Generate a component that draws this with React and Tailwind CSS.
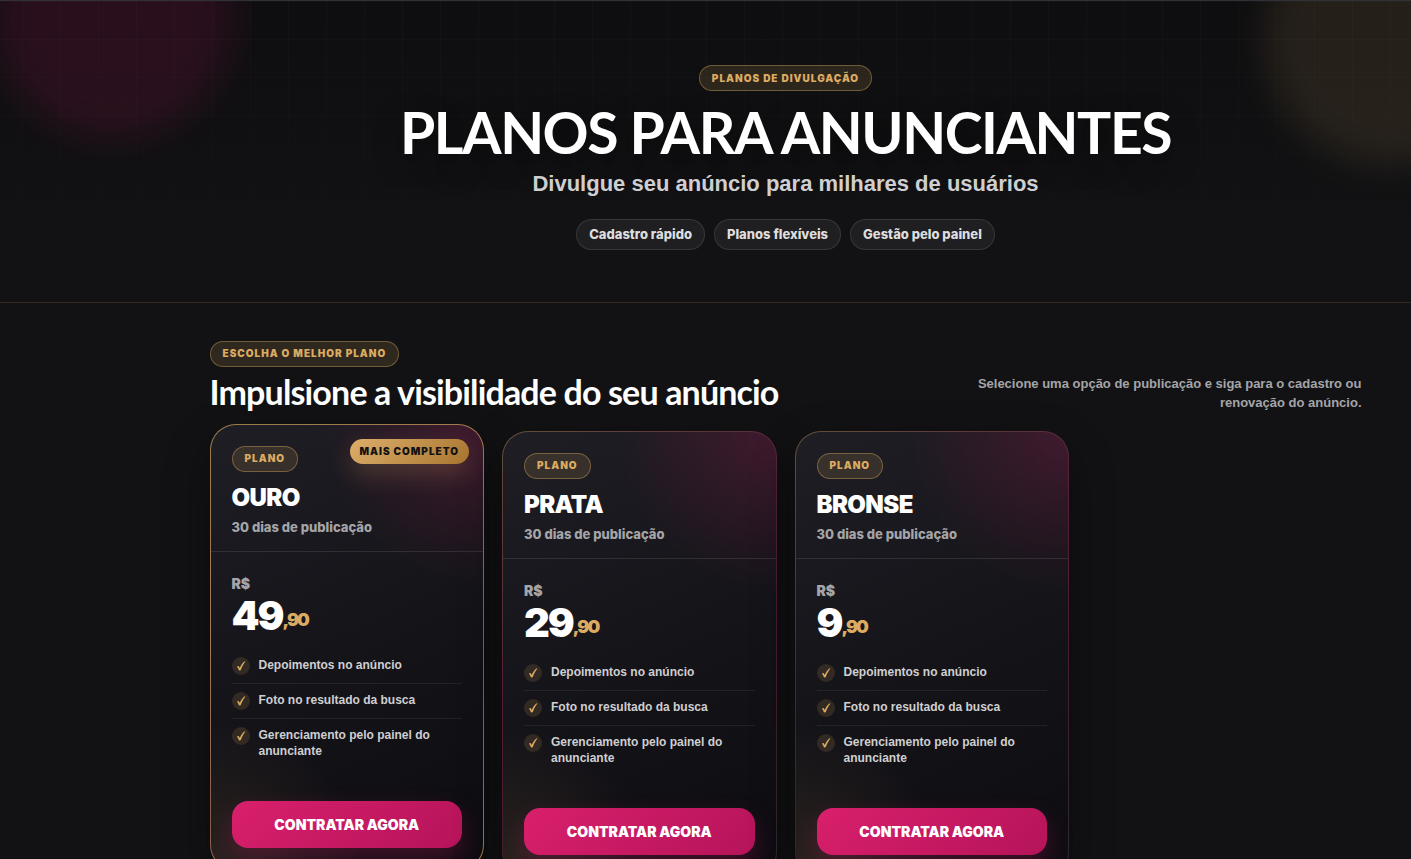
import React from 'react'
import { clsx } from 'clsx'

const plans = [
  { id: 'ouro', name: 'OURO', price: '49', cents: ',90', featured: true },
  { id: 'prata', name: 'PRATA', price: '29', cents: ',90' },
  { id: 'bronse', name: 'BRONSE', price: '9', cents: ',90' },
]

const features = [
  'Depoimentos no anúncio',
  'Foto no resultado da busca',
  'Gerenciamento pelo painel do anunciante',
]

const highlights = ['Cadastro rápido', 'Planos flexíveis', 'Gestão pelo painel']

function Badge({ children }) {
  return (
    <span className="inline-flex h-[26px] items-center rounded-full border border-[#d9a960]/40 bg-[#d9a960]/15 px-3 font-['Inter',sans-serif] text-[10px] font-black tracking-widest text-[#dcab62]">
      {children}
    </span>
  )
}

function CheckIcon() {
  return (
    <span className="flex size-[18px] shrink-0 items-center justify-center rounded-full bg-[#d9a960]/15">
      <svg viewBox="0 0 18 18" className="size-[18px]" aria-hidden="true">
        <path
          d="M4.800 9.800l1.600-.800q.500 0 .700.700l.600 1.400c1.100-2.700 2.500-4.900 4.500-6.700h1.200c-2 2.500-3.500 5.200-4.500 8.300q-.200.600-1.400.700c-.500 0-.700-.300-.900-.900C6.100 11.300 5.600 10.300 4.800 9.800z"
          fill="#dcab62"
        />
      </svg>
    </span>
  )
}

function PlanCard({ plan }) {
  return (
    <article
      className={clsx(
        'relative rounded-[26px] p-px shadow-[0_18px_44px_rgba(0,0,0,0.4)]',
        plan.featured
          ? '-mt-[7px] mb-[7px] bg-[linear-gradient(150deg,#9c7b4b,#a47a50_35%,#8a5c4c_65%,#a5814f)]'
          : 'bg-[linear-gradient(145deg,#63503a,#55203a_40%,#4d1a33_60%,#2c2a30)]'
      )}
    >
      <div className="h-full rounded-[25px] bg-[radial-gradient(circle_at_100%_0%,rgba(216,27,106,0.2),transparent_160px),radial-gradient(circle_at_0%_100%,rgba(217,169,96,0.13),transparent_150px),linear-gradient(155deg,#1f1e25,#141318_55%,#0d0c11)]">
        {plan.featured && (
          <span className="absolute top-[15px] right-[15px] flex h-[25px] items-center rounded-full bg-[linear-gradient(135deg,#dcae6a,#a87530)] px-[10px] font-['Inter',sans-serif] text-[10px] font-black tracking-widest text-[#121214] shadow-[0_10px_24px_rgba(217,169,96,0.22)]">
            MAIS COMPLETO
          </span>
        )}
        <header className="flex flex-col items-start border-b border-white/10 px-[21px] pt-[21px] pb-[14px] font-['Inter',sans-serif]">
          <Badge>PLANO</Badge>
          <h3 className="mt-3 text-[24px] leading-[28px] font-black tracking-tight text-white">{plan.name}</h3>
          <p className="mt-[5px] text-[13px] leading-[20px] font-extrabold text-[#a5a5a8]">30 dias de publicação</p>
        </header>
        <div className="px-[21px] pt-6 pb-[22px]">
          <p className="font-['Inter',sans-serif] text-white">
            <span className="block text-[14px] leading-[16px] font-black text-[#a5a5a8]">R$</span>
            <span className="mt-1 flex items-end font-black tracking-[-2px]">
              <span className="text-[40px] leading-[40px]">{plan.price}</span>
              <span className="text-[18px] leading-[32px] text-[#dcab62]">{plan.cents}</span>
            </span>
          </p>
          <ul className="mt-[13px]">
            {features.map((feature) => (
              <li key={feature} className="flex gap-[9px] border-b border-white/7 py-2 text-[12px] leading-[16px] font-bold text-[#cfcfd1] last:border-b-0">
                <CheckIcon />
                <span>{feature}</span>
              </li>
            ))}
          </ul>
          <button
            type="button"
            className="mt-[34px] h-[47px] w-full rounded-[16px] bg-[linear-gradient(135deg,#d91f6c,#b5145a)] font-['Inter',sans-serif] text-[14px] font-black text-white shadow-[0_12px_26px_rgba(216,27,106,0.25)]"
          >
            CONTRATAR AGORA
          </button>
        </div>
      </div>
    </article>
  )
}

export default function App() {
  return (
    <main className="min-h-screen overflow-hidden border-t border-[#2f3137] bg-[#121214] font-['Liberation_Sans',Arial,sans-serif] text-white">
      <section className="relative overflow-hidden border-b border-[#33291f] bg-[linear-gradient(180deg,#0e0e10,#121214_75%)] pt-16 pb-[52px] pl-40">
        <div className="absolute inset-0 bg-[linear-gradient(rgba(255,255,255,0.022)_1px,transparent_1px),linear-gradient(90deg,rgba(255,255,255,0.022)_1px,transparent_1px)] bg-[length:38px_38px] bg-[position:22px_0] [mask-image:linear-gradient(180deg,#000,transparent_92%)]" />
        <div className="absolute -top-[106px] -left-[8px] size-[242px] rounded-full bg-[#d81b6a]/13 blur-[18px]" />
        <div className="absolute -top-[90px] -right-[106px] size-[254px] rounded-full bg-[#d9a960]/11 blur-[18px]" />

        <div className="relative flex flex-col items-center text-center">
          <Badge>PLANOS DE DIVULGAÇÃO</Badge>
          <h1 className="mt-3 font-['Lato',sans-serif] text-[57px] leading-[58px] font-bold tracking-tight [text-shadow:0_10px_30px_rgba(0,0,0,0.4)]">
            PLANOS PARA ANUNCIANTES
          </h1>
          <p className="mt-[9px] text-[22px] leading-[28px] font-bold text-[#cfcfd1]">Divulgue seu anúncio para milhares de usuários</p>
          <ul className="mt-[21px] flex flex-wrap justify-center gap-[9px]">
            {highlights.map((item) => (
              <li key={item} className="flex h-[31px] items-center rounded-full border border-white/10 bg-white/6 px-3 font-['Inter',sans-serif] text-[13px] font-extrabold text-[#dededf]">
                {item}
              </li>
            ))}
          </ul>
        </div>
      </section>

      <section className="pt-[37px] pb-12 pl-40">
        <div className="mx-auto w-full max-w-[1152px]">
          <div className="flex items-end justify-between gap-6">
            <div>
              <Badge>ESCOLHA O MELHOR PLANO</Badge>
              <h2 className="mt-[5px] font-['Lato',sans-serif] text-[34px] leading-[40px] font-bold tracking-tight">
                Impulsione a visibilidade do seu anúncio
              </h2>
            </div>
            <p className="max-w-[390px] text-right text-[13px] leading-[19px] font-bold text-[#a5a5a8]">
              Selecione uma opção de publicação e siga para o cadastro ou renovação do anúncio.
            </p>
          </div>
          <div className="mt-[19px] grid grid-cols-4 gap-[18px]">
            {plans.map((plan) => (
              <PlanCard key={plan.id} plan={plan} />
            ))}
          </div>
        </div>
      </section>
    </main>
  )
}
